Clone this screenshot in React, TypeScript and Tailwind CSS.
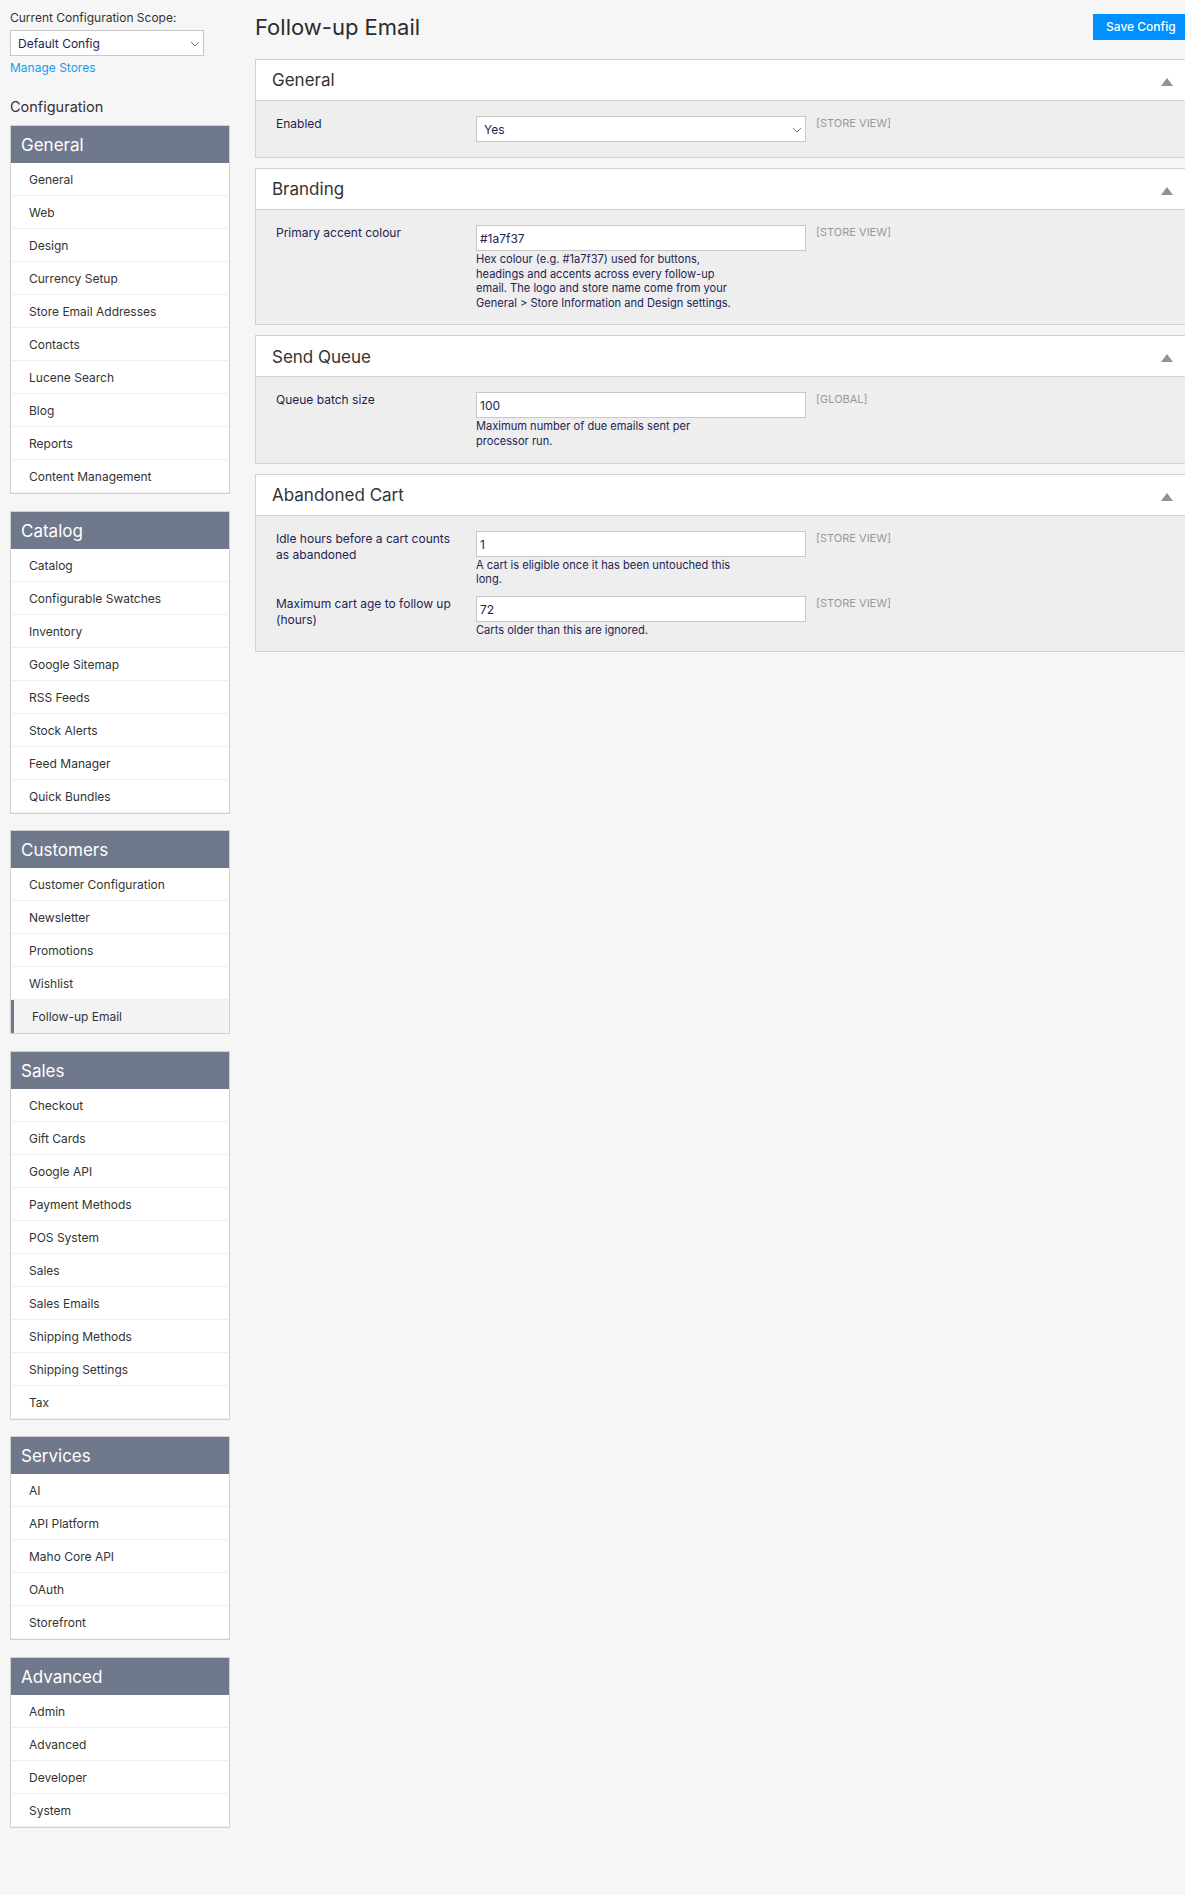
import React from 'react'

type Field = {
    label: string
    value: string
    scope: string
    note?: string
    select?: boolean
}

type Panel = {
    title: string
    fields: Field[]
}

const navGroups: { title: string; items: string[] }[] = [
    { title: 'General', items: ['General', 'Web', 'Design', 'Currency Setup', 'Store Email Addresses', 'Contacts', 'Lucene Search', 'Blog', 'Reports', 'Content Management'] },
    { title: 'Catalog', items: ['Catalog', 'Configurable Swatches', 'Inventory', 'Google Sitemap', 'RSS Feeds', 'Stock Alerts', 'Feed Manager', 'Quick Bundles'] },
    { title: 'Customers', items: ['Customer Configuration', 'Newsletter', 'Promotions', 'Wishlist', 'Follow-up Email'] },
    { title: 'Sales', items: ['Checkout', 'Gift Cards', 'Google API', 'Payment Methods', 'POS System', 'Sales', 'Sales Emails', 'Shipping Methods', 'Shipping Settings', 'Tax'] },
    { title: 'Services', items: ['AI', 'API Platform', 'Maho Core API', 'OAuth', 'Storefront'] },
    { title: 'Advanced', items: ['Admin', 'Advanced', 'Developer', 'System'] },
]

const panels: Panel[] = [
    { title: 'General', fields: [{ label: 'Enabled', value: 'Yes', scope: '[STORE VIEW]', select: true }] },
    {
        title: 'Branding',
        fields: [{
            label: 'Primary accent colour',
            value: '#1a7f37',
            scope: '[STORE VIEW]',
            note: 'Hex colour (e.g. #1a7f37) used for buttons, headings and accents across every follow-up email. The logo and store name come from your General > Store Information and Design settings.',
        }],
    },
    {
        title: 'Send Queue',
        fields: [{ label: 'Queue batch size', value: '100', scope: '[GLOBAL]', note: 'Maximum number of due emails sent per processor run.' }],
    },
    {
        title: 'Abandoned Cart',
        fields: [
            { label: 'Idle hours before a cart counts as abandoned', value: '1', scope: '[STORE VIEW]', note: 'A cart is eligible once it has been untouched this long.' },
            { label: 'Maximum cart age to follow up (hours)', value: '72', scope: '[STORE VIEW]', note: 'Carts older than this are ignored.' },
        ],
    },
]

function Chevron() {
    return (
        <svg width="10" height="6" viewBox="0 0 10 6" fill="none" className="shrink-0">
            <path d="M1 1l4 4 4-4" stroke="#77799a" strokeWidth="1" />
        </svg>
    )
}

function NavGroup({ title, items }: { title: string; items: string[] }) {
    return (
        <div className="border border-[#d1d1d1] bg-white">
            <div className="h-[37px] bg-[#70788c] pl-[10px] text-[17px] leading-[38px] text-white">{title}</div>
            {items.map((item) => {
                const active = item === 'Follow-up Email'
                return (
                    <div
                        key={item}
                        className={
                            active
                                ? 'h-[33px] border-l-[3px] border-[#70788c] bg-[#f3f3f3] pl-[18px] text-[12px] leading-[33px] text-[#333333]'
                                : 'h-[33px] border-b border-[#f0f0f0] pl-[18px] text-[12px] leading-[33px] text-[#333333]'
                        }
                    >
                        {item}
                    </div>
                )
            })}
        </div>
    )
}

function FieldRow({ field }: { field: Field }) {
    return (
        <div className="flex">
            <label className="w-[200px] shrink-0 pr-[20px] text-[12px] leading-[16px] text-[#1e2352]">{field.label}</label>
            <div className="w-[330px] shrink-0">
                {field.select ? (
                    <div className="flex h-[26px] items-center justify-between border border-[#c8c8c8] bg-white pl-[7px] pr-[3px] pt-[1px] text-[12px] text-[#1e2352]">
                        {field.value}
                        <Chevron />
                    </div>
                ) : (
                    <div className="h-[26px] border border-[#c8c8c8] bg-white pl-[3px] text-[12px] leading-[26px] text-[#1e2352]">{field.value}</div>
                )}
                {field.note && <p className="-mb-[1px] w-[262px] pt-[1px] text-[11.1px] leading-[14.6px] text-[#1e2352]">{field.note}</p>}
            </div>
            <div className="ml-[10px] text-[11px] leading-[14px] text-[#999999]">{field.scope}</div>
        </div>
    )
}

function ConfigPanel({ panel }: { panel: Panel }) {
    return (
        <div className="border-y border-l border-[#d1d1d1] bg-[#eeeeee]">
            <div className="flex h-[41px] items-center justify-between border-b border-[#d1d1d1] bg-white pl-[16px] pr-[12px]">
                <h3 className="pt-[2px] text-[17px] font-normal text-[#333333]">{panel.title}</h3>
                <svg width="12" height="8" viewBox="0 0 12 8" className="mt-[4px]">
                    <path d="M6 0l6 8H0z" fill="#929292" />
                </svg>
            </div>
            <div className="flex flex-col gap-[10px] pb-[15px] pl-[20px] pt-[15px]">
                {panel.fields.map((field) => (
                    <FieldRow key={field.label} field={field} />
                ))}
            </div>
        </div>
    )
}

export default function App() {
    return (
        <div className="flex min-h-[1895px] bg-[#f6f6f6] font-['Inter',sans-serif]">
            <aside className="ml-[10px] w-[220px] shrink-0 pt-[10px]">
                <div className="text-[12px] leading-[16px] text-[#333333]">Current Configuration Scope:</div>
                <div className="mt-[4px] flex h-[26px] w-[194px] items-center justify-between border border-[#c8c8c8] bg-white pl-[7px] pr-[3px] pt-[1px] text-[12px] text-[#1e2352]">
                    Default Config
                    <Chevron />
                </div>
                <div className="mt-[4px] text-[12px] leading-[16px] text-[#1a9af0]">Manage Stores</div>
                <div className="mt-[21px] text-[14.5px] leading-[20px] text-[#333333]">Configuration</div>
                <div className="mt-[8px] flex flex-col gap-[16.6px]">
                    {navGroups.map((group) => (
                        <NavGroup key={group.title} title={group.title} items={group.items} />
                    ))}
                </div>
            </aside>
            <main className="ml-[25px] flex-1">
                <div className="flex h-[59px] items-start justify-between">
                    <h1 className="mt-[11px] text-[22px] font-normal leading-[32px] text-[#2b2b2b]">Follow-up Email</h1>
                    <button className="mt-[14px] h-[26px] w-[92px] bg-[#0090ff] pl-[13px] text-left text-[12px] font-medium text-white">Save Config</button>
                </div>
                <div className="flex flex-col gap-[10px]">
                    {panels.map((panel) => (
                        <ConfigPanel key={panel.title} panel={panel} />
                    ))}
                </div>
            </main>
        </div>
    )
}
